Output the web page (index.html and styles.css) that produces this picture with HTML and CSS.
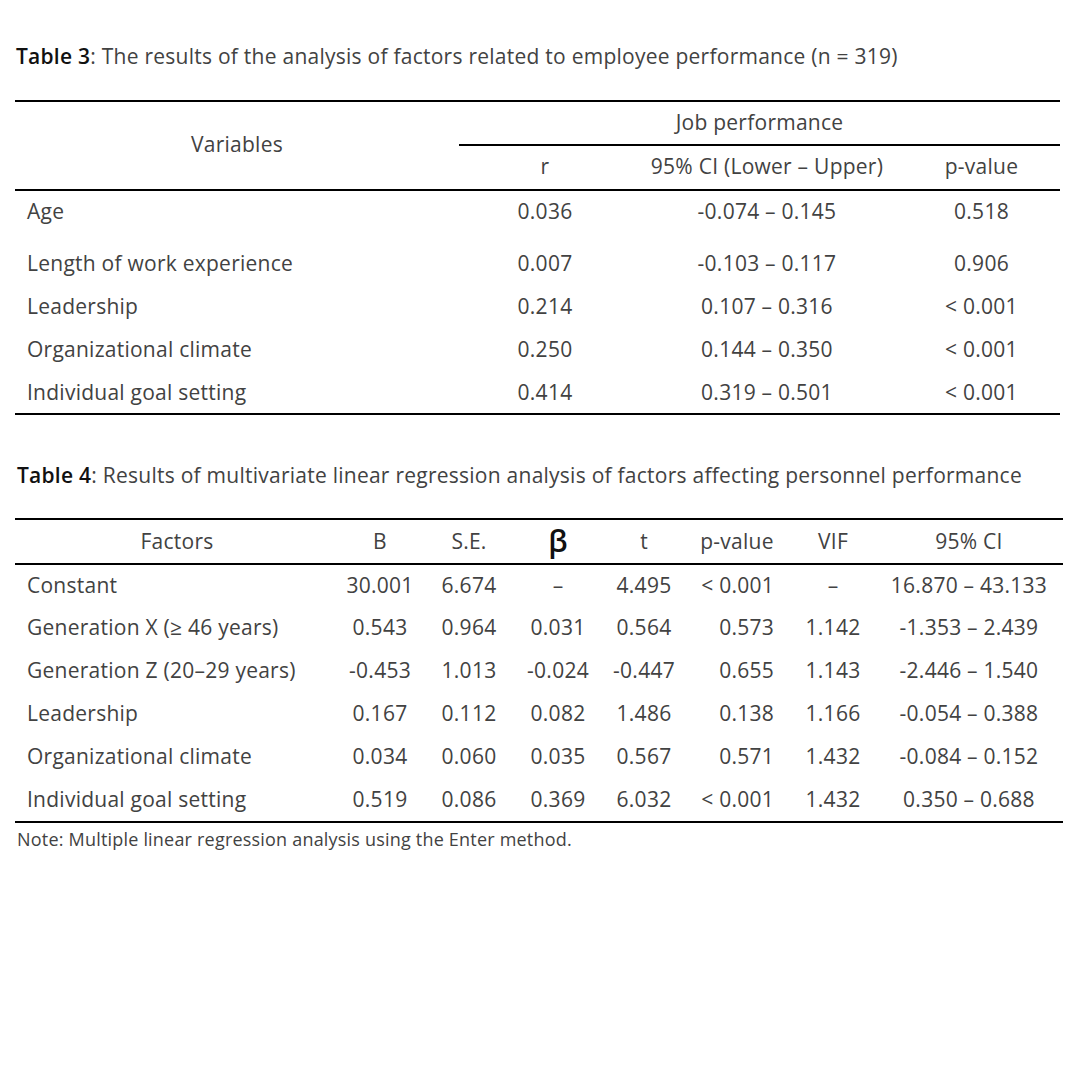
FILE: index.html
```html
<!DOCTYPE html>
<html lang="en">
<head>
<meta charset="utf-8">
<title>Tables</title>
<link rel="stylesheet" href="styles.css">
</head>
<body>
<div class="page">
  <p class="caption caption-t3"><b>Table 3</b>: The results of the analysis of factors related to employee performance (n = 319)</p>
  <table class="tbl t3">
    <colgroup>
      <col class="c3-var"><col class="c3-r"><col class="c3-ci"><col class="c3-p">
    </colgroup>
    <thead>
      <tr class="h1">
        <th rowspan="2" class="center line-bottom">Variables</th>
        <th colspan="3" class="center line-bottom">Job performance</th>
      </tr>
      <tr class="h2">
        <th class="center line-bottom">r</th>
        <th class="center line-bottom">95% CI (Lower – Upper)</th>
        <th class="center line-bottom">p-value</th>
      </tr>
    </thead>
    <tbody>
      <tr class="first"><td class="label">Age</td><td class="center">0.036</td><td class="center">-0.074 – 0.145</td><td class="center">0.518</td></tr>
      <tr><td class="label">Length of work experience</td><td class="center">0.007</td><td class="center">-0.103 – 0.117</td><td class="center">0.906</td></tr>
      <tr><td class="label">Leadership</td><td class="center">0.214</td><td class="center">0.107 – 0.316</td><td class="center">&lt; 0.001</td></tr>
      <tr><td class="label">Organizational climate</td><td class="center">0.250</td><td class="center">0.144 – 0.350</td><td class="center">&lt; 0.001</td></tr>
      <tr class="last"><td class="label">Individual goal setting</td><td class="center">0.414</td><td class="center">0.319 – 0.501</td><td class="center">&lt; 0.001</td></tr>
    </tbody>
  </table>

  <p class="caption caption-t4"><b>Table 4</b>: Results of multivariate linear regression analysis of factors affecting personnel performance</p>
  <table class="tbl t4">
    <colgroup>
      <col class="c4-f"><col class="c4-b"><col class="c4-se"><col class="c4-beta"><col class="c4-t"><col class="c4-p"><col class="c4-vif"><col class="c4-ci">
    </colgroup>
    <thead>
      <tr class="h">
        <th class="center">Factors</th>
        <th class="center">B</th>
        <th class="center">S.E.</th>
        <th class="center beta">β</th>
        <th class="center">t</th>
        <th class="center">p-value</th>
        <th class="center">VIF</th>
        <th class="center ci">95% CI</th>
      </tr>
    </thead>
    <tbody>
      <tr><td class="label">Constant</td><td class="center">30.001</td><td class="center">6.674</td><td class="center">–</td><td class="center">4.495</td><td class="right">&lt; 0.001</td><td class="center">–</td><td class="center ci">16.870 – 43.133</td></tr>
      <tr><td class="label">Generation X (≥ 46 years)</td><td class="center">0.543</td><td class="center">0.964</td><td class="center">0.031</td><td class="center">0.564</td><td class="right">0.573</td><td class="center">1.142</td><td class="center ci">-1.353 – 2.439</td></tr>
      <tr><td class="label">Generation Z (20–29 years)</td><td class="center">-0.453</td><td class="center">1.013</td><td class="center">-0.024</td><td class="center">-0.447</td><td class="right">0.655</td><td class="center">1.143</td><td class="center ci">-2.446 – 1.540</td></tr>
      <tr><td class="label">Leadership</td><td class="center">0.167</td><td class="center">0.112</td><td class="center">0.082</td><td class="center">1.486</td><td class="right">0.138</td><td class="center">1.166</td><td class="center ci">-0.054 – 0.388</td></tr>
      <tr><td class="label">Organizational climate</td><td class="center">0.034</td><td class="center">0.060</td><td class="center">0.035</td><td class="center">0.567</td><td class="right">0.571</td><td class="center">1.432</td><td class="center ci">-0.084 – 0.152</td></tr>
      <tr class="last"><td class="label">Individual goal setting</td><td class="center">0.519</td><td class="center">0.086</td><td class="center">0.369</td><td class="center">6.032</td><td class="right">&lt; 0.001</td><td class="center">1.432</td><td class="center ci">0.350 – 0.688</td></tr>
    </tbody>
  </table>
  <p class="note">Note: Multiple linear regression analysis using the Enter method.</p>
</div>
</body>
</html>
```

FILE: styles.css
```css
html, body {
  margin: 0;
  padding: 0;
  background: #ffffff;
}

body {
  width: 1080px;
  height: 1080px;
  font-family: "Open Sans", "Noto Sans", sans-serif;
  color: #424242;
  font-size: 21px;
  letter-spacing: 0.25px;
}

.page {
  padding: 41px 0 0 15px;
}

.caption {
  margin: 0;
  padding-left: 1px;
  font-size: 21px;
  letter-spacing: 0.25px;
  line-height: 30px;
  color: #424242;
}

.caption b {
  font-weight: 600;
  color: #111111;
}

.caption-t3 {
  margin-bottom: 29px;
}

.caption-t4 {
  margin-top: 45px;
  margin-bottom: 28px;
  padding-left: 2px;
}

.tbl {
  border-collapse: collapse;
  table-layout: fixed;
  border-top: 2px solid #000;
  border-bottom: 2px solid #000;
}

.tbl th,
.tbl td {
  padding: 0;
  font-weight: 400;
  white-space: nowrap;
  vertical-align: middle;
  line-height: 26px;
}

.t3 { width: 1045px; }
.c3-var { width: 444px; }
.c3-r { width: 172px; }
.c3-ci { width: 272px; }
.c3-p { width: 157px; }

.t3 .h1 th { height: 44px; padding-bottom: 3px; box-sizing: border-box; }
.t3 .h2 th { height: 45px; padding-bottom: 4px; box-sizing: border-box; }
.t3 td { height: 43px; }
.t3 tr.first td { height: 51px; vertical-align: top; padding-top: 7px; box-sizing: border-box; }

.line-bottom { border-bottom: 2px solid #000; }

.center { text-align: center; }
.right { text-align: right; padding-right: 11px !important; }
.label { text-align: left; padding-left: 12px !important; }

.t4 { width: 1048px; }
.c4-f { width: 324px; }
.c4-b { width: 82px; }
.c4-se { width: 96px; }
.c4-beta { width: 82px; }
.c4-t { width: 90px; }
.c4-p { width: 96px; }
.c4-vif { width: 96px; }
.c4-ci { width: 182px; }

.t4 .h th {
  height: 45px;
  padding-bottom: 2px;
  box-sizing: border-box;
  border-bottom: 2px solid #000;
}
.t4 td {
  height: 43px;
  padding-bottom: 3px;
  box-sizing: border-box;
}
.t4 .ci { padding-right: 6px; }

.tbl th.beta {
  font-size: 30px;
  font-weight: 600;
  color: #111;
  line-height: 1;
}

.note {
  margin: 4px 0 0 2px;
  font-size: 18px;
  letter-spacing: 0.2px;
  line-height: 24px;
  color: #424242;
}
```
